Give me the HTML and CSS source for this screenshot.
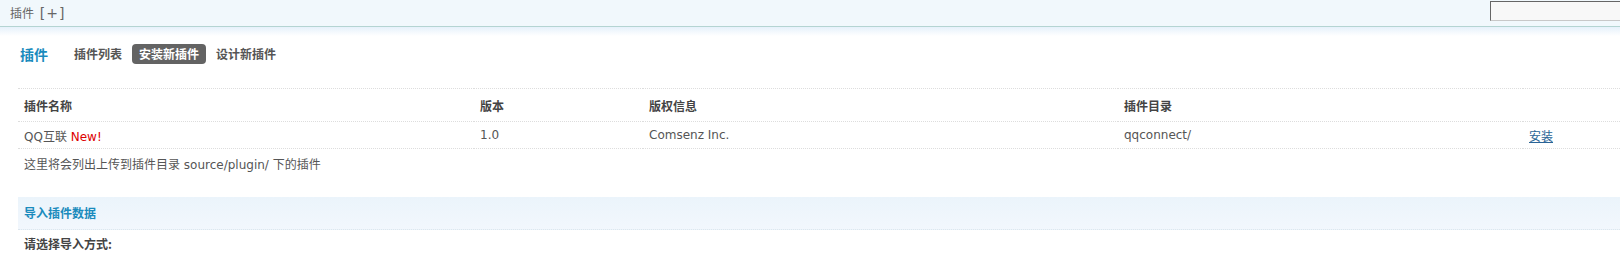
FILE: index.html
```html
<!DOCTYPE html>
<html lang="zh-CN">
  <head>
    <meta charset="UTF-8" />
    <title>插件</title>
    <link rel="stylesheet" href="styles.css">
  </head>
  <body>
    <div class="topbar">
      <span class="crumb">插件 <em>[+]</em></span>
      <input class="search" type="text" />
    </div>
    <div class="fade"></div>

    <div class="main">
      <div class="nav">
        <h3>插件</h3>
        <a href="#">插件列表</a>
        <a href="#" class="current">安装新插件</a>
        <a href="#">设计新插件</a>
      </div>

      <table class="tb">
        <tr class="header">
          <th class="c1">插件名称</th>
          <th class="c2">版本</th>
          <th class="c3">版权信息</th>
          <th class="c4">插件目录</th>
          <th class="c5"></th>
        </tr>
        <tr class="row">
          <td>QQ互联 <span class="new">New!</span></td>
          <td>1.0</td>
          <td>Comsenz Inc.</td>
          <td>qqconnect/</td>
          <td><a href="#" class="act">安装</a></td>
        </tr>
        <tr class="tips">
          <td colspan="5">这里将会列出上传到插件目录 source/plugin/ 下的插件</td>
        </tr>
      </table>

      <div class="section">导入插件数据</div>
      <div class="label">请选择导入方式:</div>
    </div>
  </body>
</html>
```

FILE: styles.css
```css
* {
  margin: 0;
  padding: 0;
  box-sizing: border-box;
}

body {
  font: 12px "DejaVu Sans", "Noto Sans CJK SC", sans-serif;
  color: #555;
  background: #fff;
  overflow: hidden;
}

.topbar {
  height: 27px;
  display: flex;
  align-items: flex-start;
  justify-content: space-between;
  background: #f1f8fc;
  border-bottom: 1px solid #b4d4d2;
}

.crumb {
  padding-left: 10px;
  line-height: 26px;
  color: #666;
  font-family: "Noto Sans CJK SC", sans-serif;
}

.crumb em {
  font: normal 14px "DejaVu Sans", sans-serif;
  margin-left: 3px;
  letter-spacing: 1px;
}

.search {
  width: 130px;
  height: 20px;
  margin-top: 1px;
  background: #f8f8f8;
  border: 1px solid #c8c8c8;
  border-top-color: #666;
  border-left-color: #666;
  border-width: 1px 0 1px 1px;
}

.fade {
  height: 9px;
  background: linear-gradient(#e6f1fb, #fff);
}

.main {
  padding-left: 18px;
}

.nav {
  display: flex;
  align-items: center;
  height: 20px;
  margin-top: 8px;
}

.nav h3 {
  font: bold 14px "Noto Sans CJK SC", sans-serif;
  color: #1a8bbd;
  margin: 0 20px 0 2px;
}

.nav a {
  height: 20px;
  line-height: 20px;
  padding: 0 6px;
  margin-right: 4px;
  border-radius: 4px;
  font-weight: bold;
  color: #555;
  text-decoration: none;
  font-family: "Noto Sans CJK SC", sans-serif;
}

.nav a.current {
  padding: 0 7px;
  background: #636363;
  color: #fff;
}

.tb {
  width: 1602px;
  margin-top: 24px;
  border-collapse: collapse;
}

.tb th,
.tb td {
  text-align: left;
  padding-left: 6px;
  vertical-align: middle;
}

.tb .header th {
  height: 33px;
  font-weight: bold;
  color: #444;
  font-family: "Noto Sans CJK SC", sans-serif;
  border-top: 1px dotted #ddd;
  border-bottom: 1px dotted #ddd;
}

.tb .row td {
  height: 27px;
  border-bottom: 1px dotted #ddd;
  color: #555;
}

.tb .tips td {
  height: 29px;
  color: #555;
}

.c1 { width: 456px; }
.c2 { width: 169px; }
.c3 { width: 475px; }
.c4 { width: 405px; }

.new {
  color: #d00;
}

.act {
  color: #2a6496;
  text-decoration: underline;
  font-family: "Noto Sans CJK SC", sans-serif;
}

.section {
  margin-top: 19px;
  height: 33px;
  line-height: 32px;
  padding-left: 6px;
  background: linear-gradient(#ebf4fb, #f2f7fd);
  border-bottom: 1px dotted #dde6ee;
  color: #1a8bbd;
  font-weight: bold;
  font-family: "Noto Sans CJK SC", sans-serif;
}

.label {
  padding-left: 6px;
  line-height: 28px;
  font-weight: bold;
  color: #444;
  font-family: "Noto Sans CJK SC", sans-serif;
}
```
